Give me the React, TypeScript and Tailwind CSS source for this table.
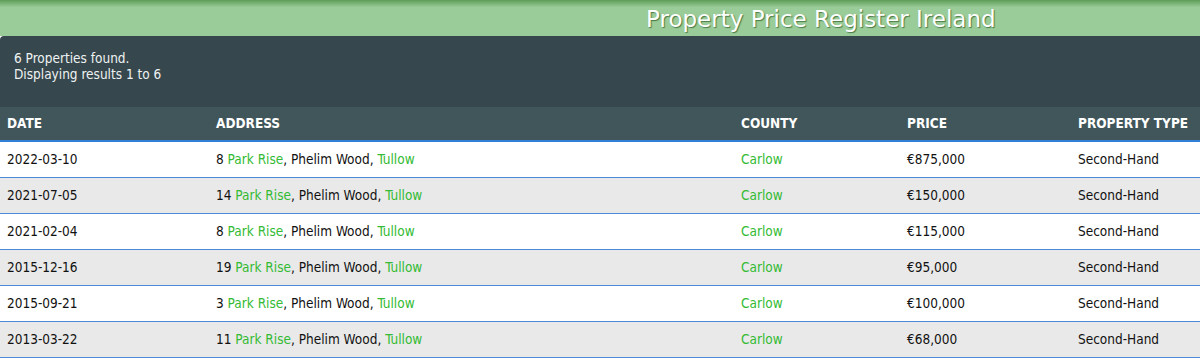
import React from 'react';

interface Sale {
  date: string;
  num: string;
  price: string;
}

const sales: Sale[] = [
  { date: '2022-03-10', num: '8', price: '€875,000' },
  { date: '2021-07-05', num: '14', price: '€150,000' },
  { date: '2021-02-04', num: '8', price: '€115,000' },
  { date: '2015-12-16', num: '19', price: '€95,000' },
  { date: '2015-09-21', num: '3', price: '€100,000' },
  { date: '2013-03-22', num: '11', price: '€68,000' },
];

const font = { fontFamily: '"DejaVu Sans Condensed", "DejaVu Sans", Verdana, sans-serif' };

const App = () => {
  return (
    <div className="w-[1200px] h-[363px] bg-white text-[13.5px] text-[#111]" style={font}>
      {/* Title bar */}
      <div className="h-[36px] bg-gradient-to-b from-[#5e9c58] via-[#99cc98] via-[20%] to-[#99cc98] flex items-center pl-[646px]">
        <h1
          className="text-[23px] leading-none text-white pt-[3px] [text-shadow:1px_1px_1px_#4a7a46]"
          style={{ fontFamily: '"DejaVu Sans", Verdana, sans-serif' }}
        >
          Property Price Register Ireland
        </h1>
      </div>

      {/* Results info */}
      <div className="h-[71px] bg-[#36474d] rounded-tl-[4px] text-[#eef2f2] px-[14px] pt-[14px] leading-[16px]">
        <div>6 Properties found.</div>
        <div>Displaying results 1 to 6</div>
      </div>

      <div className="flex flex-col">
        <div className="h-[35px] bg-[#41565b] text-white uppercase font-bold flex items-center border-b-2 border-b-[#2f7fd6]">
          <div className="w-[209px] pl-[7px]">Date</div>
          <div className="w-[525px] pl-[7px]">Address</div>
          <div className="w-[166px] pl-[7px]">County</div>
          <div className="w-[171px] pl-[7px]">Price</div>
          <div className="flex-1 pl-[7px]">Property Type</div>
        </div>
        {sales.map((s, i) => (
          <div
            key={i}
            className={
              i % 2 === 0
                ? 'h-[36px] bg-white flex items-center border-b border-b-[#4a8ad8]'
                : 'h-[36px] bg-[#e9e9e9] flex items-center border-b border-b-[#4a8ad8]'
            }
          >
            <div className="w-[209px] pl-[7px]">{s.date}</div>
            <div className="w-[525px] pl-[7px]">
              {s.num} <span className="text-[#33bb33]">Park Rise</span>, Phelim Wood,{' '}
              <span className="text-[#33bb33]">Tullow</span>
            </div>
            <div className="w-[166px] pl-[7px] text-[#33bb33]">Carlow</div>
            <div className="w-[171px] pl-[7px]">{s.price}</div>
            <div className="flex-1 pl-[7px]">Second-Hand</div>
          </div>
        ))}
      </div>
    </div>
  );
};

export default App;
